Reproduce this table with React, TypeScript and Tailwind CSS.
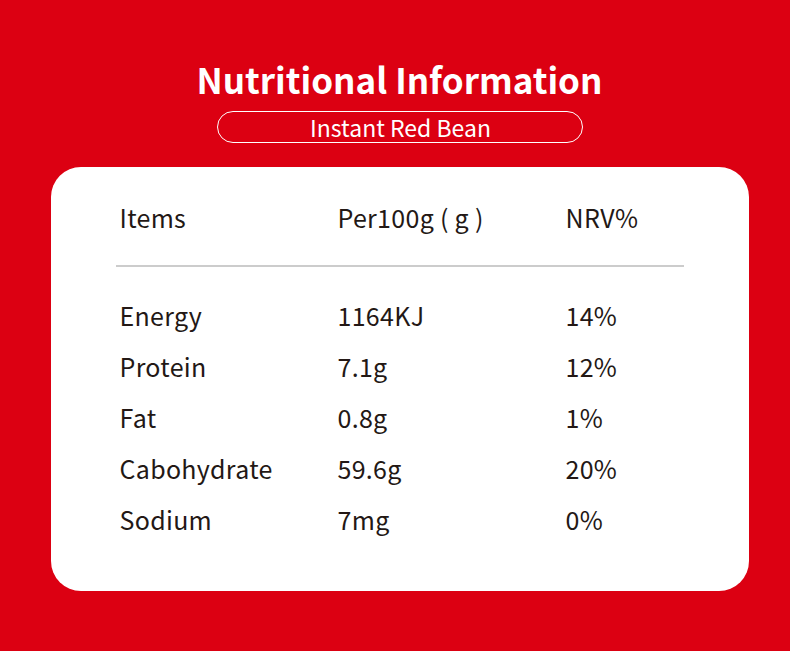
import React from "react";

const rows = [
  ["Energy", "1164KJ", "14%"],
  ["Protein", "7.1g", "12%"],
  ["Fat", "0.8g", "1%"],
  ["Cabohydrate", "59.6g", "20%"],
  ["Sodium", "7mg", "0%"],
];

export default function App() {
  return (
    <div
      className="w-[790px] h-[651px] bg-[#dc0012] flex flex-col items-center overflow-hidden pl-[9px]"
      style={{ fontFamily: '"Noto Sans CJK SC", "Noto Sans", sans-serif' }}
    >
      <h1 className="mt-[55px] text-white font-bold text-[35px] leading-[48px]">
        Nutritional Information
      </h1>
      <div className="mt-[8px] w-[366px] h-[32px] rounded-full border border-white flex items-center justify-center text-white text-[23px] leading-none pl-[2px]">
        Instant Red Bean
      </div>
      <div className="mt-[24px] w-[698px] h-[424px] bg-white rounded-[30px] px-[65px] pt-[27px] text-[#231815]">
        <div className="flex h-[48px] items-center text-[25px] tracking-[0.3px] px-[4px]">
          <div className="w-[218px]">Items</div>
          <div className="w-[228px]">Per100g ( g )</div>
          <div>NRV%</div>
        </div>
        <div className="mt-[23px] h-[2px] bg-[#cccccc]" />
        <div className="mt-[23px] flex flex-col px-[4px]">
          {rows.map((r) => (
            <div key={r[0]} className="flex h-[51px] items-center text-[25px] tracking-[0.3px]">
              <div className="w-[218px]">{r[0]}</div>
              <div className="w-[228px]">{r[1]}</div>
              <div>{r[2]}</div>
            </div>
          ))}
        </div>
      </div>
    </div>
  );
}
